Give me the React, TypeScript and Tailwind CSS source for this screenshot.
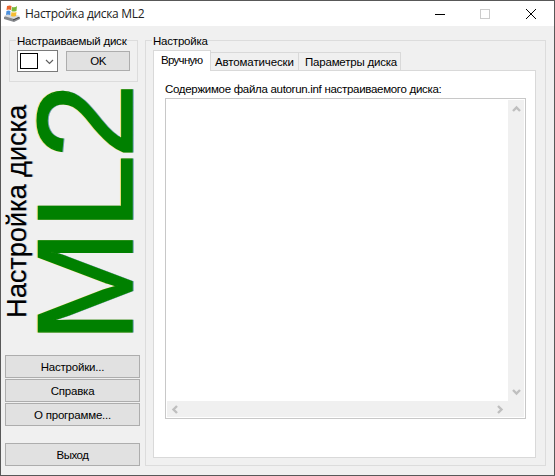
import type { ReactNode } from "react";

function Chevron({ className = "", color = "#bfbfbf", width = 2.4 }: { className?: string; color?: string; width?: number }) {
  return (
    <svg width="9" height="9" viewBox="0 0 9 9" className={className} fill="none" stroke={color} strokeWidth={width}>
      <path d="M1 3 4.5 6.5 8 3" />
    </svg>
  );
}

function Button({ children, className = "" }: { children: ReactNode; className?: string }) {
  return (
    <button className={`flex shrink-0 items-center justify-center whitespace-nowrap border border-[#adadad] bg-[#e1e1e1] ${className}`}>
      {children}
    </button>
  );
}

function AppIcon() {
  return (
    <svg width="16" height="17" viewBox="0 0 16 17">
      <path d="M0 12 5 9 16 12v2l-6 3-10-3z" fill="#85888c" />
      <path d="M0 11 6 8l10 3-6 3z" fill="#d7dadd" />
      <path d="m9 15 6-2.500" stroke="#444" />
      <path d="M3 1q3-1 4.500 0L7 5Q5 4 2.500 5z" fill="#e8642c" />
      <path d="M8 2q3 1 5-1l-.5 5Q9 7 7.500 6z" fill="#79b83c" />
      <path d="M2.500 6q2-1 4 0L6 10q-2-1-4 0z" fill="#4a8fdd" />
      <path d="M7.500 7q2 1 5 0L12 11q-3 1-5 0z" fill="#f5bd32" />
    </svg>
  );
}

function Logo() {
  const letters = "0 112.7 184.3";
  return (
    <svg width="140" height="254" viewBox="0 0 140 254" className="block overflow-visible font-['Liberation_Sans',sans-serif]">
      <g transform="translate(25 235) rotate(-90)" fontSize="28">
        <text x="-1" y="1" fill="#9fabb8" textLength="213" lengthAdjust="spacingAndGlyphs">Настройка диска</text>
        <text x="-1" y="0" fill="#000" textLength="213" lengthAdjust="spacingAndGlyphs">Настройка диска</text>
      </g>
      <g transform="translate(130.700 261) rotate(-90)" fontSize="136" strokeWidth="1.400">
        <text x={letters} y="1" fill="#6b9fae" stroke="#6b9fae">ML2</text>
        <text x={letters} y="-0.5" fill="#f0e080" stroke="#f0e080">ML2</text>
        <text x={letters} y="0" fill="#008000" stroke="#008000">ML2</text>
      </g>
    </svg>
  );
}

export default function App() {
  return (
    <div className="flex h-[476px] w-[555px] flex-col overflow-hidden border border-[#585858] bg-[#f0f0f0] font-['Liberation_Sans',sans-serif] text-[11.5px] leading-[14px] tracking-[-0.2px] text-black">
      <header className="flex h-[25px] shrink-0 items-center bg-white pl-[3px] font-['Open_Sans','Noto_Sans',sans-serif] text-[12px] text-[#222]">
        <AppIcon />
        <span className="ml-[5px] whitespace-nowrap tracking-[-0.32px]">Настройка диска ML2</span>
        <svg width="102" height="12" viewBox="0 0 102 12" className="ml-auto mr-[17px]" fill="none" shapeRendering="crispEdges">
          <path d="M0 6.5h10" stroke="#000" />
          <rect x="45.5" y="1.500" width="9" height="9" stroke="#ccc" />
          <path d="m91 1 10 10m0-10L91 11" stroke="#000" shapeRendering="auto" />
        </svg>
      </header>

      <div className="flex min-h-0 flex-1">
        <aside className="flex w-[144px] shrink-0 flex-col">
          <fieldset className="ml-2 mt-[7px] h-[49px] w-[129px] shrink-0">
            <legend className="relative z-10 ml-[7px] h-[14px] whitespace-nowrap bg-[#f0f0f0] pl-px pt-px tracking-[-0.22px]">Настраиваемый диск</legend>
            <div className="-mt-[7px] flex h-[42px] items-start border border-[#dcdcdc] pl-[7px] pt-[9px]">
              <div className="flex h-[22px] w-[41px] items-center border border-[#7a7a7a] bg-white pl-[2px]">
                <span className="h-4 w-[18px] border border-black" />
                <Chevron className="ml-[7px]" color="#606060" width={1.2} />
              </div>
              <Button className="ml-2 mt-px h-5 w-16 tracking-[-0.6px]">OK</Button>
            </div>
          </fieldset>
          <div className="h-[254px] shrink-0">
            <Logo />
          </div>
          <nav className="ml-1 mt-[19px] flex w-[135px] flex-col gap-px">
            <Button className="h-[23px]">Настройки...</Button>
            <Button className="h-[23px]">Справка</Button>
            <Button className="h-[23px]">О программе...</Button>
            <Button className="mt-4 h-[23px] tracking-[-0.5px]">Выход</Button>
          </nav>
        </aside>

        <fieldset className="mt-[7px] h-[433px] w-[401px] shrink-0">
          <legend className="relative z-10 ml-[7px] h-[14px] bg-[#f0f0f0] pl-px pt-px">Настройка</legend>
          <div className="-mt-[7px] h-[426px] border border-[#dcdcdc] pl-[7px] pt-[9px]">
            <div className="flex h-[21px] items-end">
              <div className="z-10 h-[21px] w-[58px] whitespace-nowrap border border-b-0 border-[#d9d9d9] bg-white pl-[7px] pt-[2px] tracking-[-0.7px]">Вручную</div>
              <div className="h-[19px] w-[88px] whitespace-nowrap border border-l-0 border-b-0 border-[#d9d9d9] pl-[4px] pt-[2px] tracking-[-0.12px]">Автоматически</div>
              <div className="h-[19px] w-[102px] whitespace-nowrap border border-l-0 border-b-0 border-[#d9d9d9] pl-[6px] pt-[2px]">Параметры диска</div>
            </div>
            <div className="-mt-px h-[388px] w-[383px] border border-[#d9d9d9] bg-white pl-[11px] pt-[11px]">
              <div className="h-[16px] whitespace-nowrap tracking-[-0.3px]">Содержимое файла autorun.inf настраиваемого диска:</div>
              <div className="grid h-[321px] w-[361px] grid-cols-[1fr_16px] grid-rows-[1fr_16px] border border-[#c8c8c8] bg-white p-px">
                <div />
                <div className="flex flex-col items-center justify-between bg-[#f0f0f0] pb-[5px] pt-[5px]">
                  <Chevron className="rotate-180" />
                  <Chevron />
                </div>
                <div className="flex items-center justify-between bg-[#f0f0f0] px-[4px]">
                  <Chevron className="rotate-90" />
                  <Chevron className="-rotate-90" />
                </div>
                <div className="bg-[#f0f0f0]" />
              </div>
            </div>
          </div>
        </fieldset>
      </div>
    </div>
  );
}
